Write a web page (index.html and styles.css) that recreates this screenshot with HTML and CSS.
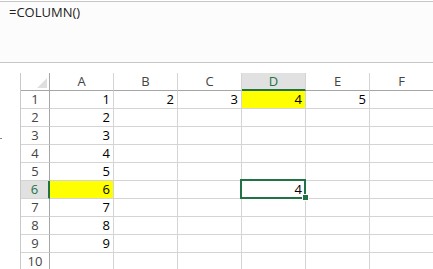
FILE: index.html
```html
<!DOCTYPE html>
<html lang="en">
<head>
    <meta charset="UTF-8">
    <title>COLUMN</title>
    <link rel="stylesheet" href="styles.css">
</head>
<body>
    <div class="formula-bar">
        <span class="formula">=COLUMN()</span>
    </div>

    <div class="sheet">
        <div class="gutter"><span class="tick"></span></div>
        <div class="grid">
            <div class="row head">
                <div class="corner"><span class="corner-mark"></span></div>
                <div class="col-head">A</div>
                <div class="col-head">B</div>
                <div class="col-head">C</div>
                <div class="col-head selected">D</div>
                <div class="col-head">E</div>
                <div class="col-head">F</div>
            </div>
            <div class="row">
                <div class="row-head">1</div>
                <div class="cell">1</div>
                <div class="cell">2</div>
                <div class="cell">3</div>
                <div class="cell yellow">4</div>
                <div class="cell">5</div>
                <div class="cell"></div>
            </div>
            <div class="row">
                <div class="row-head">2</div>
                <div class="cell">2</div>
                <div class="cell"></div><div class="cell"></div><div class="cell"></div><div class="cell"></div><div class="cell"></div>
            </div>
            <div class="row">
                <div class="row-head">3</div>
                <div class="cell">3</div>
                <div class="cell"></div><div class="cell"></div><div class="cell"></div><div class="cell"></div><div class="cell"></div>
            </div>
            <div class="row">
                <div class="row-head">4</div>
                <div class="cell">4</div>
                <div class="cell"></div><div class="cell"></div><div class="cell"></div><div class="cell"></div><div class="cell"></div>
            </div>
            <div class="row">
                <div class="row-head">5</div>
                <div class="cell">5</div>
                <div class="cell"></div><div class="cell"></div><div class="cell"></div><div class="cell"></div><div class="cell"></div>
            </div>
            <div class="row">
                <div class="row-head selected">6</div>
                <div class="cell yellow">6</div>
                <div class="cell"></div>
                <div class="cell"></div>
                <div class="cell active">4</div>
                <div class="cell"></div>
                <div class="cell"></div>
            </div>
            <div class="row">
                <div class="row-head">7</div>
                <div class="cell">7</div>
                <div class="cell"></div><div class="cell"></div><div class="cell"></div><div class="cell"></div><div class="cell"></div>
            </div>
            <div class="row">
                <div class="row-head">8</div>
                <div class="cell">8</div>
                <div class="cell"></div><div class="cell"></div><div class="cell"></div><div class="cell"></div><div class="cell"></div>
            </div>
            <div class="row">
                <div class="row-head">9</div>
                <div class="cell">9</div>
                <div class="cell"></div><div class="cell"></div><div class="cell"></div><div class="cell"></div><div class="cell"></div>
            </div>
            <div class="row">
                <div class="row-head">10</div>
                <div class="cell"></div><div class="cell"></div><div class="cell"></div><div class="cell"></div><div class="cell"></div><div class="cell"></div>
            </div>
        </div>
    </div>
</body>
</html>
```

FILE: styles.css
```css
body {
    margin: 0;
    background: #fff;
    font-family: "Open Sans", "DejaVu Sans", sans-serif;
    font-size: 13px;
    line-height: 17px;
    overflow: hidden;
}

.formula-bar {
    margin-top: 1px;
    height: 58px;
    border-top: 1px solid #c6c6c6;
    border-bottom: 1px solid #c6c6c6;
    background: #fcfcfc;
    padding: 2px 0 0 9px;
    box-sizing: content-box;
    color: #222;
}

.sheet {
    display: flex;
    margin-top: 10px;
}

.gutter {
    width: 20px;
    flex-shrink: 0;
}

.tick {
    display: block;
    width: 2px;
    height: 1px;
    margin-top: 65px;
    background: #888;
}

.grid {
    border-left: 1px solid #c8c8c8;
    flex: 1;
    overflow: hidden;
}

.row {
    display: flex;
    height: 18px;
}

.row > div {
    box-sizing: border-box;
    height: 18px;
    flex-shrink: 0;
    border-bottom: 1px solid #d4d4d4;
}

.corner,
.row-head {
    width: 29px;
    border-right: 1px solid #a6a6a6;
    text-align: center;
    color: #444;
}

.corner {
    display: flex;
    justify-content: flex-end;
    align-items: flex-end;
    padding: 0 2px 2px 0;
}

.corner-mark {
    width: 0;
    height: 0;
    border-left: 10px solid transparent;
    border-bottom: 10px solid #dfdfdf;
}

.col-head,
.cell {
    width: 64px;
    border-right: 1px solid #d4d4d4;
}

.head > div {
    border-bottom-color: #a6a6a6;
}

.col-head {
    text-align: center;
    color: #444;
}

.col-head.selected {
    background: #e1e1e1;
    color: #217346;
    border-bottom: 2px solid #217346;
}

.row-head.selected {
    background: #e1e1e1;
    color: #217346;
    border-right: 2px solid #217346;
}

.cell {
    text-align: right;
    padding-right: 3px;
    color: #000;
}

.yellow {
    background: #ffff00;
}

.cell.active {
    position: relative;
}

.cell.active::after {
    content: "";
    position: absolute;
    top: -2px;
    left: -2px;
    right: -1px;
    bottom: -1px;
    border: 2px solid #217346;
}

.cell.active::before {
    content: "";
    position: absolute;
    left: 60px;
    top: 13px;
    width: 5px;
    height: 5px;
    background: #217346;
    border: 1px solid #fff;
    z-index: 1;
}
```
